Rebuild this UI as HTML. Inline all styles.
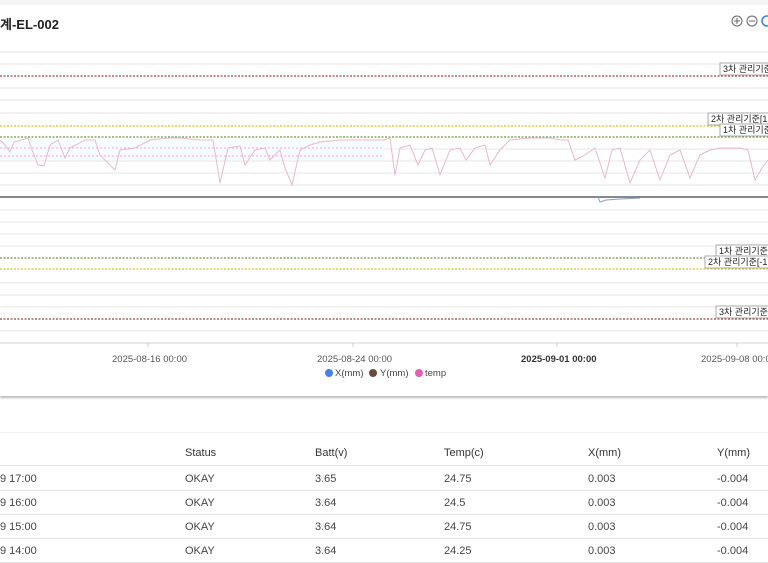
<!DOCTYPE html>
<html><head><meta charset="utf-8"><style>
body{margin:0;width:768px;height:562px;overflow:hidden;background:#fff;font-family:"Liberation Sans","Noto Sans CJK KR",sans-serif;position:relative}
.top{position:absolute;left:0;top:0;width:768px;height:5px;background:#f4f4f4}
.card{position:absolute;left:0;top:5px;width:768px;height:391px;background:#fff;box-shadow:0 2px 2px #bbb}
.title{position:absolute;left:0;top:9px;font-size:13px;font-weight:bold;color:#222}
.tbl{position:absolute;left:0;top:432px;width:768px;height:130px;background:#fff;border-top:1px solid #f2f2f2}
.row{position:absolute;left:0;width:768px;height:24px;border-bottom:1px solid #e2e2e2;font-family:"Liberation Sans Narrow","Liberation Sans",sans-serif;font-size:11px;color:#444}
.row span{position:absolute;top:7px}
</style></head><body>
<div class="top"></div>
<div class="card">
<div class="title">계-EL-002</div>
<svg style="position:absolute;left:0;top:0" width="768" height="391" viewBox="0 5 768 391">
<g stroke="#e4e4e4" stroke-width="1">
<line x1="0" y1="52" x2="768" y2="52"/><line x1="0" y1="64" x2="768" y2="64"/><line x1="0" y1="88" x2="768" y2="88"/><line x1="0" y1="100" x2="768" y2="100"/><line x1="0" y1="113" x2="768" y2="113"/><line x1="0" y1="149" x2="768" y2="149"/><line x1="0" y1="161" x2="768" y2="161"/><line x1="0" y1="173" x2="768" y2="173"/><line x1="0" y1="185" x2="768" y2="185"/><line x1="0" y1="210" x2="768" y2="210"/><line x1="0" y1="222" x2="768" y2="222"/><line x1="0" y1="234" x2="768" y2="234"/><line x1="0" y1="246" x2="768" y2="246"/><line x1="0" y1="283" x2="768" y2="283"/><line x1="0" y1="295" x2="768" y2="295"/><line x1="0" y1="307" x2="768" y2="307"/><line x1="0" y1="331" x2="768" y2="331"/>
</g>
<line x1="0" y1="343" x2="768" y2="343" stroke="#d0d0d0"/>
<line x1="148" y1="343" x2="148" y2="347" stroke="#ccc"/><line x1="353" y1="343" x2="353" y2="347" stroke="#ccc"/><line x1="557" y1="343" x2="557" y2="347" stroke="#ccc"/><line x1="737" y1="343" x2="737" y2="347" stroke="#ccc"/>
<rect x="0" y="140" width="384" height="20" fill="#f6fdff"/>
<line x1="0" y1="148" x2="384" y2="148" stroke="#f6a0f0" stroke-dasharray="2,2"/>
<line x1="0" y1="156" x2="384" y2="156" stroke="#f6a0f0" stroke-dasharray="2,2"/>
<g stroke-dasharray="2,1.5" stroke-width="1.3">
<line x1="0" y1="76" x2="768" y2="76" stroke="#a0403a"/>
<line x1="0" y1="126" x2="768" y2="126" stroke="#d8c020"/>
<line x1="0" y1="137" x2="768" y2="137" stroke="#6a9a4a"/>
<line x1="0" y1="258" x2="768" y2="258" stroke="#6a9a4a"/>
<line x1="0" y1="269" x2="768" y2="269" stroke="#d8c020"/>
<line x1="0" y1="319" x2="768" y2="319" stroke="#a0403a"/>
</g>
<polyline fill="none" stroke="#e8b8d0" stroke-width="1" points="0,140 5,145 10,152 14,142 28,138 32,150 38,165 44,166 50,145 58,140 65,158 70,148 85,140 95,140 100,155 115,170 120,150 135,148 150,140 170,138 180,138 200,140 213,140 220,183 228,148 240,146 245,165 255,150 265,148 270,160 280,150 285,168 292,185 300,150 310,145 320,142 340,140 360,140 384,140 390,138 395,175 400,148 410,145 418,165 425,150 432,148 440,175 450,150 460,148 466,160 475,148 485,145 490,165 500,150 510,140 530,138 550,138 560,140 568,140 575,160 585,155 595,148 605,178 612,150 620,148 630,183 640,160 650,150 660,180 670,155 680,150 690,178 700,155 710,150 720,148 740,148 748,150 755,180 762,168 768,160"/>
<line x1="0" y1="197" x2="768" y2="197" stroke="#5a6070" stroke-width="1.5"/>
<path d="M598 197 L600 202 L606 200 L620 199 L640 198" fill="none" stroke="#8aa0c0"/>
<g font-size="9" fill="#222">
<rect x="720" y="63" width="52" height="12" fill="#fff" stroke="#aaa"/><text x="723" y="72">3차 관리기준</text>
<rect x="708" y="113" width="64" height="12" fill="#fff" stroke="#aaa"/><text x="711" y="122">2차 관리기준[1.</text>
<rect x="720" y="124" width="52" height="12" fill="#fff" stroke="#aaa"/><text x="723" y="133">1차 관리기준</text>
<rect x="716" y="245" width="56" height="12" fill="#fff" stroke="#aaa"/><text x="719" y="254">1차 관리기준</text>
<rect x="705" y="256" width="67" height="12" fill="#fff" stroke="#aaa"/><text x="708" y="265">2차 관리기준[-1.</text>
<rect x="716" y="306" width="56" height="12" fill="#fff" stroke="#aaa"/><text x="719" y="315">3차 관리기준</text>
</g>
<g font-size="9.5" fill="#555">
<text x="112" y="362">2025-08-16 00:00</text><text x="317" y="362">2025-08-24 00:00</text><text x="521" y="362" font-weight="bold" fill="#333">2025-09-01 00:00</text><text x="701" y="362">2025-09-08 00:00</text>
</g>
<g font-size="9.5" fill="#444">
<circle cx="329" cy="373" r="4" fill="#4a7ff0"/><text x="335" y="376">X(mm)</text>
<circle cx="373" cy="373" r="4" fill="#6a4a3a"/><text x="380" y="376">Y(mm)</text>
<circle cx="419" cy="373" r="4" fill="#e060b0"/><text x="425" y="376">temp</text>
</g>
<g fill="none" stroke="#666" stroke-width="1">
<circle cx="737" cy="21" r="5"/><path d="M734 21h6M737 18v6"/>
<circle cx="752" cy="21" r="5"/><path d="M749 21h6"/>
<circle cx="767" cy="21" r="5" stroke="#3a80e0" stroke-width="1.5"/>
</g>
</svg>
</div>
<div class="tbl">
<div class="row" style="top:7px;height:25px;color:#333"><span style="left:185px">Status</span><span style="left:315px">Batt(v)</span><span style="left:444px">Temp(c)</span><span style="left:588px">X(mm)</span><span style="left:717px">Y(mm)</span></div>
<div class="row" style="top:33px"><span style="left:0">9 17:00</span><span style="left:185px">OKAY</span><span style="left:315px">3.65</span><span style="left:444px">24.75</span><span style="left:588px">0.003</span><span style="left:717px">-0.004</span></div>
<div class="row" style="top:57px"><span style="left:0">9 16:00</span><span style="left:185px">OKAY</span><span style="left:315px">3.64</span><span style="left:444px">24.5</span><span style="left:588px">0.003</span><span style="left:717px">-0.004</span></div>
<div class="row" style="top:81px"><span style="left:0">9 15:00</span><span style="left:185px">OKAY</span><span style="left:315px">3.64</span><span style="left:444px">24.75</span><span style="left:588px">0.003</span><span style="left:717px">-0.004</span></div>
<div class="row" style="top:105px"><span style="left:0">9 14:00</span><span style="left:185px">OKAY</span><span style="left:315px">3.64</span><span style="left:444px">24.25</span><span style="left:588px">0.003</span><span style="left:717px">-0.004</span></div>
</div>
</body></html>
